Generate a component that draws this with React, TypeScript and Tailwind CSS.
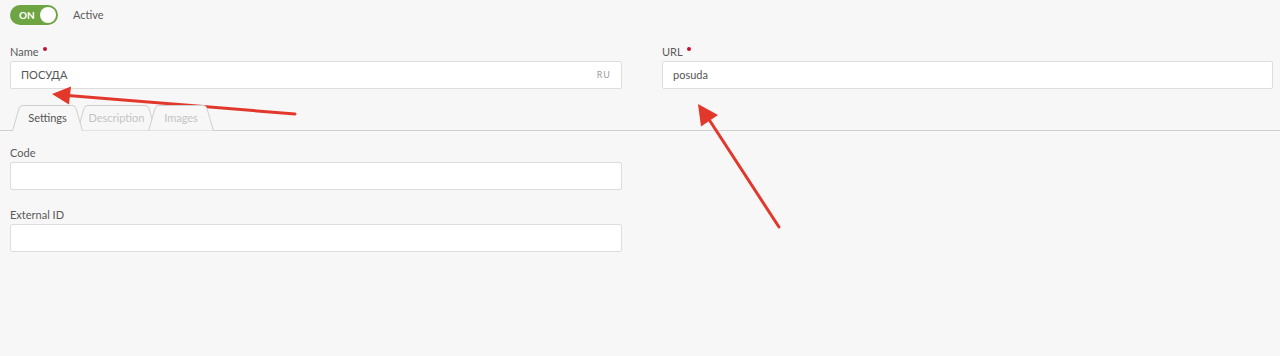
import React from "react";

const font = { fontFamily: '"Lato", "Open Sans", "Noto Sans", sans-serif' };

function Label({ text, required }: { text: string; required?: boolean }) {
  return (
    <div className="h-[14px] mb-[2px] flex items-start text-[11px] leading-[14px] text-[#5a5a5a]">
      <span>{text}</span>
      {required && <span className="ml-[4px] mt-[2px] w-[4px] h-[4px] rounded-full bg-[#c8102e]" />}
    </div>
  );
}

function Input({ value, suffix }: { value?: string; suffix?: string }) {
  return (
    <div className="h-[28px] bg-white border border-[#dddddd] rounded-[2px] flex items-center px-[10px] text-[11px] text-[#555]">
      <span className="flex-1">{value}</span>
      {suffix && <span className="text-[9px] tracking-[1px] text-[#9a9a9a]">{suffix}</span>}
    </div>
  );
}

function Tab({ label, width, active, z }: { label: string; width: number; active?: boolean; z: string }) {
  const w = width;
  const d = `M0.5,26 L7,3.5 Q8,0.5 11,0.5 L${w - 11},0.5 Q${w - 8},0.5 ${w - 7},3.5 L${w - 0.5},26`;
  return (
    <div className={`relative h-[26px] -mb-px flex items-center justify-center ${z}`} style={{ width: w }}>
      <svg className="absolute inset-0" width={w} height={26} viewBox={`0 0 ${w} 26`}>
        <path d={active ? d : d + " Z"} fill="#f7f7f7" stroke="#cfcfcf" strokeWidth="1" />
      </svg>
      <span className={`relative text-[11px] pt-[1px] ${active ? "text-[#555]" : "text-[#c4c4c4]"}`}>{label}</span>
    </div>
  );
}

export default function App() {
  return (
    <div className="relative w-[1280px] h-[356px] bg-[#f7f7f7] overflow-hidden" style={font}>
      <div className="px-[10px] pt-[5px]">
        <div className="flex items-center h-[20px]">
          <div className="relative w-[48px] h-[20px] rounded-full bg-[#6fa443] flex items-center">
            <span className="ml-[9px] text-[10px] font-bold text-white leading-none">ON</span>
            <span className="absolute right-[2px] top-[2px] w-[16px] h-[16px] rounded-full bg-white" />
          </div>
          <span className="ml-[15px] text-[11px] text-[#5a5a5a]">Active</span>
        </div>

        <div className="mt-[20px] grid grid-cols-[612px_611px] gap-x-[40px]">
          <div>
            <Label text="Name" required />
            <Input value="ПОСУДА" suffix="RU" />
          </div>
          <div>
            <Label text="URL" required />
            <Input value="posuda" />
          </div>
        </div>
      </div>

      <div className="mt-[16px] h-[26px] border-b border-[#cfcfcf] flex items-end pl-[12px]">
        <Tab label="Settings" width={71} active z="z-30" />
        <Tab label="Description" width={79} z="z-10 -ml-[6px]" />
        <Tab label="Images" width={66} z="z-20 -ml-[8px]" />
      </div>

      <div className="px-[10px] pt-[15px] w-[632px]">
        <Label text="Code" />
        <Input />
        <div className="mt-[18px]">
          <Label text="External ID" />
          <Input />
        </div>
      </div>

      <svg className="absolute inset-0 pointer-events-none" width="1280" height="356" viewBox="0 0 1280 356">
        <line x1="295" y1="114" x2="68" y2="95.5" stroke="#e2382b" strokeWidth="3" strokeLinecap="round" />
        <polygon points="52,94 71,86.5 69,104.5" fill="#e2382b" />
        <line x1="779" y1="227" x2="710" y2="121" stroke="#e2382b" strokeWidth="3" strokeLinecap="round" />
        <polygon points="698,104 718,115 701,126.5" fill="#e2382b" />
      </svg>
    </div>
  );
}
